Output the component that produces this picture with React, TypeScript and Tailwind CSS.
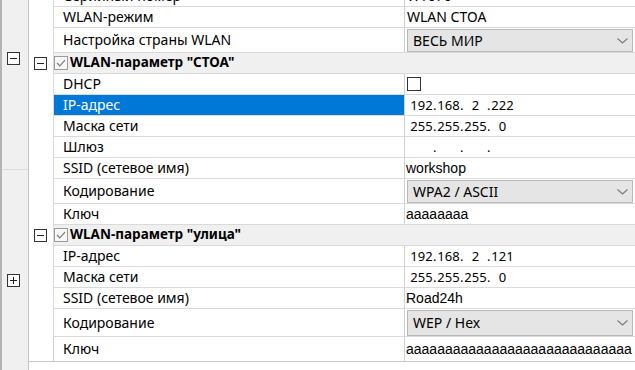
import React from "react";

type RowKind = "text" | "combo" | "group" | "check" | "ip" | "edit";

type Row = {
  kind: RowKind;
  label: string;
  value?: string;
  h: string;
  selected?: boolean;
  last?: boolean;
};

// row heights come from the screenshot (125% scaling, rows are not all equal)
const ROWS: Row[] = [
  { kind: "text", label: "Серийный номер", value: "WT070", h: "h-[21px] -mt-[14px]" },
  { kind: "text", label: "WLAN-режим", value: "WLAN СТОА", h: "h-[21px]" },
  { kind: "combo", label: "Настройка страны WLAN", value: "ВЕСЬ МИР", h: "h-[25px]" },
  { kind: "group", label: 'WLAN-параметр "СТОА"', h: "h-[21px]" },
  { kind: "check", label: "DHCP", h: "h-[21px]" },
  { kind: "ip", label: "IP-адрес", value: "192.168.2.222", h: "h-[21px]", selected: true },
  { kind: "ip", label: "Маска сети", value: "255.255.255.0", h: "h-[21px]" },
  { kind: "ip", label: "Шлюз", value: "...", h: "h-[21px]" },
  { kind: "edit", label: "SSID (сетевое имя)", value: "workshop", h: "h-[21px]" },
  { kind: "combo", label: "Кодирование", value: "WPA2 / ASCII", h: "h-[25px]" },
  { kind: "edit", label: "Ключ", value: "aaaaaaaa", h: "h-[21px]" },
  { kind: "group", label: 'WLAN-параметр "улица"', h: "h-[21px]" },
  { kind: "ip", label: "IP-адрес", value: "192.168.2.121", h: "h-[21px]" },
  { kind: "ip", label: "Маска сети", value: "255.255.255.0", h: "h-[21px]" },
  { kind: "edit", label: "SSID (сетевое имя)", value: "Road24h", h: "h-[21px]" },
  { kind: "combo", label: "Кодирование", value: "WEP / Hex", h: "h-[28px]" },
  { kind: "edit", label: "Ключ", value: "aaaaaaaaaaaaaaaaaaaaaaaaaaaaa", h: "h-[24px]", last: true },
];

const ExpandBox = ({ open }: { open?: boolean }) => (
  <div className="relative h-[13px] w-[13px] border border-[#333333] bg-white">
    <div className="absolute left-[2px] top-[5px] h-[1px] w-[7px] bg-[#222222]" />
    {!open && <div className="absolute left-[5px] top-[2px] h-[7px] w-[1px] bg-[#222222]" />}
  </div>
);

const Chevron = () => (
  <svg width="11" height="6" viewBox="0 0 11 6" className="shrink-0">
    <polyline points="0.5,0.5 5.5,5 10.5,0.5" fill="none" stroke="#7a7a7a" strokeWidth="1.1" />
  </svg>
);

const IpValue = ({ value }: { value: string }) => {
  const parts = value.split(".");
  return (
    <div className="flex items-center pl-[5px] text-[13px]">
      {parts.map((p, i) => (
        <React.Fragment key={i}>
          {i > 0 && <span className="w-[4px] text-left">.</span>}
          <span className="w-[23px] text-center">{p}</span>
        </React.Fragment>
      ))}
    </div>
  );
};

const Value = ({ row }: { row: Row }) => {
  switch (row.kind) {
    case "combo":
      return (
        <div className="flex h-full flex-1 pt-[1px] pl-[2px] pr-[2px]">
          <div className="flex flex-1 items-center justify-between border border-[#b9b9b9] bg-[#e5e5e5] pl-[5px] pr-[4px]">
            <span>{row.value}</span>
            <Chevron />
          </div>
        </div>
      );
    case "check":
      return (
        <div className="flex items-center pl-[2px]">
          <div className="h-[14px] w-[14px] border border-[#333333] bg-white" />
        </div>
      );
    case "ip":
      return <IpValue value={row.value ?? ""} />;
    case "edit":
      return (
        <div className="flex items-center pl-[1px] font-['Liberation_Sans',sans-serif] text-[14px]">
          {row.value}
        </div>
      );
    default:
      return <div className="flex items-center pl-[2px]">{row.value}</div>;
  }
};

const GridRow = ({ row }: { row: Row }) => {
  const line = row.last ? "" : "border-b border-[#dadada]";
  return (
    <div className={`flex shrink-0 ${row.h}`}>
      <div className="flex w-[24px] shrink-0 items-center pl-[5px]">
        {row.kind === "group" && <ExpandBox open />}
      </div>
      {row.kind === "group" ? (
        <div className={`flex flex-1 items-center border-l border-[#d0d0d0] bg-[#f0f0f0] ${line}`}>
          <div className="flex h-[14px] w-[14px] items-center justify-center border border-[#9a9a9a] bg-[#f7f7f7]">
            <svg width="10" height="8" viewBox="0 0 10 8">
              <polyline points="1,4 3.8,6.8 9,1.2" fill="none" stroke="#7c7c7c" strokeWidth="1.2" />
            </svg>
          </div>
          <span className="pl-[2px] text-[13.5px] font-bold">{row.label}</span>
        </div>
      ) : (
        <div className={`flex flex-1 border-l border-[#d0d0d0] ${line}`}>
          <div
            className={`flex w-[351px] shrink-0 items-center border-r border-[#d0d0d0] pl-[9px] ${
              row.selected ? "bg-[#0078d7] text-white" : ""
            }`}
          >
            {row.label}
          </div>
          <div className="flex flex-1">
            <Value row={row} />
          </div>
        </div>
      )}
    </div>
  );
};

export default function App() {
  return (
    <div className="flex h-[370px] w-[635px] overflow-hidden bg-white font-['Noto_Sans',sans-serif] text-[14px] leading-none text-black">
      {/* left gutter with outer expanders */}
      <div className="flex w-[28px] shrink-0 flex-col border-l-2 border-[#b4b4b4] bg-[#f0f0f0]">
        <div className="h-[170px] shrink-0 border-b border-[#dcdcdc] pl-[5px] pt-[52px]">
          <ExpandBox open />
        </div>
        <div className="pl-[5px] pt-[104px]">
          <ExpandBox />
        </div>
      </div>

      {/* property grid */}
      <div className="flex flex-1 flex-col border-l border-[#c4c4c4]">
        <div className="flex flex-col border-b border-[#c8c8c8]">
          {ROWS.map((row, i) => (
            <GridRow key={i} row={row} />
          ))}
        </div>
      </div>
    </div>
  );
}
